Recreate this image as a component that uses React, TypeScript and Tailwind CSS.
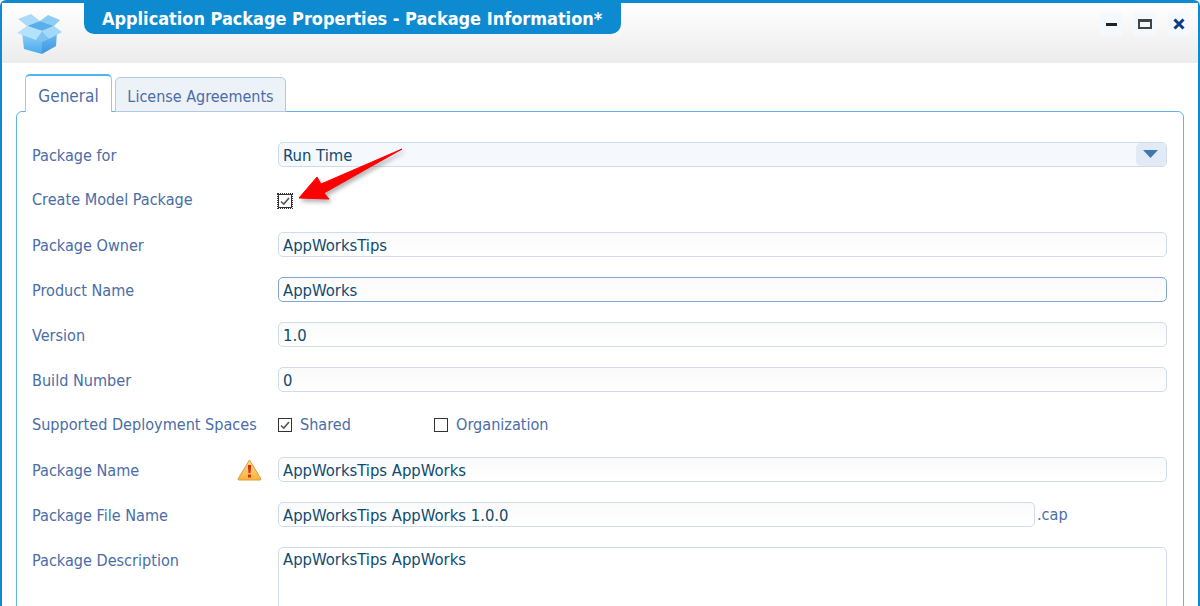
import React from "react";

const font = { fontFamily: '"DejaVu Sans Condensed", "DejaVu Sans", sans-serif' };

function Label({ children, flat }: { children: React.ReactNode; flat?: boolean }) {
  return <div className={`w-[246px] shrink-0 text-[16.1px] text-[#4a6da7] leading-[20px] ${flat ? "" : "pt-[2px]"}`}>{children}</div>;
}

function Field({ value, active, w }: { value: string; active?: boolean; w?: string }) {
  return (
    <div className={`h-[25px] ${w ?? "w-[889px]"} rounded-[5px] border ${active ? "border-[#7fa6d6]" : "border-[#cfdcec]"} bg-gradient-to-b from-[#fafafa] to-white pl-[4px] pt-[3px] flex items-center text-[16.5px] text-[#0f4a70]`}>
      {value}
    </div>
  );
}

function Check({ checked, dotted }: { checked?: boolean; dotted?: boolean }) {
  return (
    <div className={`w-[14px] h-[14px] border border-[#333] bg-white flex items-center justify-center ${dotted ? "mt-[2px] outline-1 outline-dotted outline-[#333]" : ""}`}>
      {checked && (
        <svg width="12" height="12" viewBox="0 0 12 12"><path d="M2 6.5 L4.8 9 L10 3" fill="none" stroke="#555" strokeWidth="1.6" /></svg>
      )}
    </div>
  );
}

function Box() {
  return (
    <svg width="48" height="42" viewBox="0 0 48 42">
      <defs>
        <linearGradient id="f" x1="0" y1="0" x2="0" y2="1"><stop offset="0" stopColor="#8fd2f8" /><stop offset="1" stopColor="#4ba8ec" /></linearGradient>
        <linearGradient id="s" x1="0" y1="0" x2="0" y2="1"><stop offset="0" stopColor="#6cbcf2" /><stop offset="1" stopColor="#3f95de" /></linearGradient>
      </defs>
      <path d="M3 6 L16 1 L25 8 L12 13 Z" fill="#a9dbf8" />
      <path d="M25 8 L33 2 L45 7 L39 13 Z" fill="#8ccdf6" />
      <path d="M12 13 L25 8 L39 13 L27 18 Z" fill="#5aaeea" />
      <path d="M7 19 L27 25 L27 41 L9 36 Z" fill="url(#f)" />
      <path d="M27 25 L42 19 L41 33 L27 41 Z" fill="url(#s)" />
      <path d="M12 13 L27 18 L21 27 L2 20 Z" fill="#b5e2fb" />
      <path d="M27 18 L39 13 L47 19 L34 26 Z" fill="#a2d8f9" />
      <path d="M27 18 L21 27 L27 29 L34 26 Z" fill="#7cc4f2" />
    </svg>
  );
}

export default function App() {
  return (
    <div className="w-[1200px] h-[606px] overflow-hidden bg-white relative" style={font}>
      <div className="h-full border-x-2 border-t-[3px] border-[#0e8bd0] rounded-t-[6px]">
        <div className="h-[60px] bg-gradient-to-b from-white to-[#ececec] flex items-start relative">
          <div className="ml-[13px] mt-[10px] w-[48px]"><Box /></div>
          <div className="ml-[21px] h-[32px] w-[537px] -mt-[1px] bg-[#0e8bd0] rounded-b-[10px] pl-[18px] pt-[1px] text-white font-bold text-[17.95px] leading-[32px]">
            Application Package Properties - Package Information*
          </div>
          <div className="ml-auto mr-[8px] mt-[10px] flex gap-[12px]">
            <div className="w-[22px] h-[22px] bg-[#f3f9fd] flex items-center justify-center"><div className="w-[11px] h-[3px] bg-[#222]" /></div>
            <div className="w-[22px] h-[22px] bg-[#f3f9fd] flex items-center justify-center"><div className="w-[14px] h-[10px] border-2 border-t-[3px] border-[#444]" /></div>
            <div className="w-[22px] h-[22px] bg-[#f3f9fd] flex items-center justify-center">
              <svg width="12" height="12" viewBox="0 0 12 12"><path d="M1.5 1.5 L10.5 10.5 M10.5 1.5 L1.5 10.5" stroke="#0d3c82" strokeWidth="3" /></svg>
            </div>
          </div>
        </div>
        <div className="px-[14px] pt-[11px]">
          <div className="flex items-end pl-[9px] gap-[3px] relative z-10 -mb-px">
            <div className="h-[38px] w-[87px] border border-[#9ec9ea] border-t-[2px] border-t-[#4fb5f2] border-b-0 rounded-t-[5px] bg-white text-[17px] pt-[6px] text-[#4a6da7] flex items-center justify-center">General</div>
            <div className="h-[35px] w-[171px] border border-[#b4c9e0] rounded-t-[5px] bg-[#edf1f8] text-[16px] pt-[5px] text-[#4a6da7] flex items-center justify-center">License Agreements</div>
          </div>
          <div className="w-[1168px] h-[500px] border border-[#62b2e4] rounded-[6px] pl-[15px] pt-[30px]">
            <div className="flex flex-col">
              <div className="flex items-center h-[25px]">
                <Label>Package for</Label>
                <div className="h-[25px] w-[889px] rounded-[5px] border border-[#cfdcec] bg-[#f5f8fc] pl-[4px] flex items-center justify-between text-[16.5px] text-[#0f4a70]">
                  <span className="pt-[3px]">Run Time</span>
                  <div className="h-full w-[30px] bg-[#e2eaf5] rounded-[5px] flex items-center justify-center">
                    <svg width="16" height="9" viewBox="0 0 16 9"><path d="M0 0 H15 L7.5 8 Z" fill="#3f78b0" /></svg>
                  </div>
                </div>
              </div>
              <div className="flex items-center h-[25px] mt-[20px]"><Label flat>Create Model Package</Label><Check checked dotted /></div>
              <div className="flex items-center h-[25px] mt-[20px]"><Label>Package Owner</Label><Field value="AppWorksTips" /></div>
              <div className="flex items-center h-[25px] mt-[20px]"><Label>Product Name</Label><Field value="AppWorks" active /></div>
              <div className="flex items-center h-[25px] mt-[20px]"><Label>Version</Label><Field value="1.0" /></div>
              <div className="flex items-center h-[25px] mt-[20px]"><Label>Build Number</Label><Field value="0" /></div>
              <div className="flex items-center h-[25px] mt-[20px]">
                <Label flat>Supported Deployment Spaces</Label>
                <Check checked /><span className="ml-[8px] w-[134px] text-[16.1px] text-[#4a6da7] pt-[1px]">Shared</span>
                <Check /><span className="ml-[8px] text-[16.1px] text-[#4a6da7] pt-[1px]">Organization</span>
              </div>
              <div className="flex items-center h-[25px] mt-[20px]">
                <div className="w-[246px] shrink-0 flex items-center justify-between pr-[16px]">
                  <span className="text-[16.1px] text-[#4a6da7] pt-[3px] leading-[20px]">Package Name</span>
                  <svg width="25" height="22" viewBox="0 0 25 22">
                    <defs><linearGradient id="w" x1="0" y1="0" x2="0" y2="1"><stop offset="0" stopColor="#fde08a" /><stop offset="1" stopColor="#f7b23e" /></linearGradient></defs>
                    <path d="M12.5 1 L24 20 Q24 21 23 21 H2 Q1 21 1 20 Z" fill="url(#w)" stroke="#dd9c3a" />
                    <path d="M10.8 6 H14.2 L13.5 14 H11.5 Z M11 15.5 H14 V18.5 H11 Z" fill="#d9281e" />
                  </svg>
                </div>
                <Field value="AppWorksTips AppWorks" />
              </div>
              <div className="flex items-center h-[25px] mt-[20px]">
                <Label>Package File Name</Label>
                <Field value="AppWorksTips AppWorks 1.0.0" w="w-[757px]" />
                <span className="ml-[2px] text-[16.1px] text-[#4a6da7] pt-[1px]">.cap</span>
              </div>
              <div className="flex items-start h-[80px] mt-[20px]">
                <div className="pt-[2px]"><Label>Package Description</Label></div>
                <div className="h-[80px] w-[889px] rounded-[5px] border border-[#cfdcec] pl-[4px] pt-[1px] text-[16.5px] leading-[22px] text-[#0f4a70]">AppWorksTips AppWorks</div>
              </div>
            </div>
          </div>
        </div>
      </div>
      <svg className="absolute left-[296px] top-[146px] drop-shadow-[2px_3px_2px_rgba(0,0,0,0.3)]" width="110" height="60" viewBox="0 0 110 60">
        <path d="M106 3 L25 38 L21 31 L3 52 L33 53 L28 47 Z" fill="#ff0000" stroke="#ff0000" strokeWidth="1" strokeLinejoin="miter" />
      </svg>
    </div>
  );
}
